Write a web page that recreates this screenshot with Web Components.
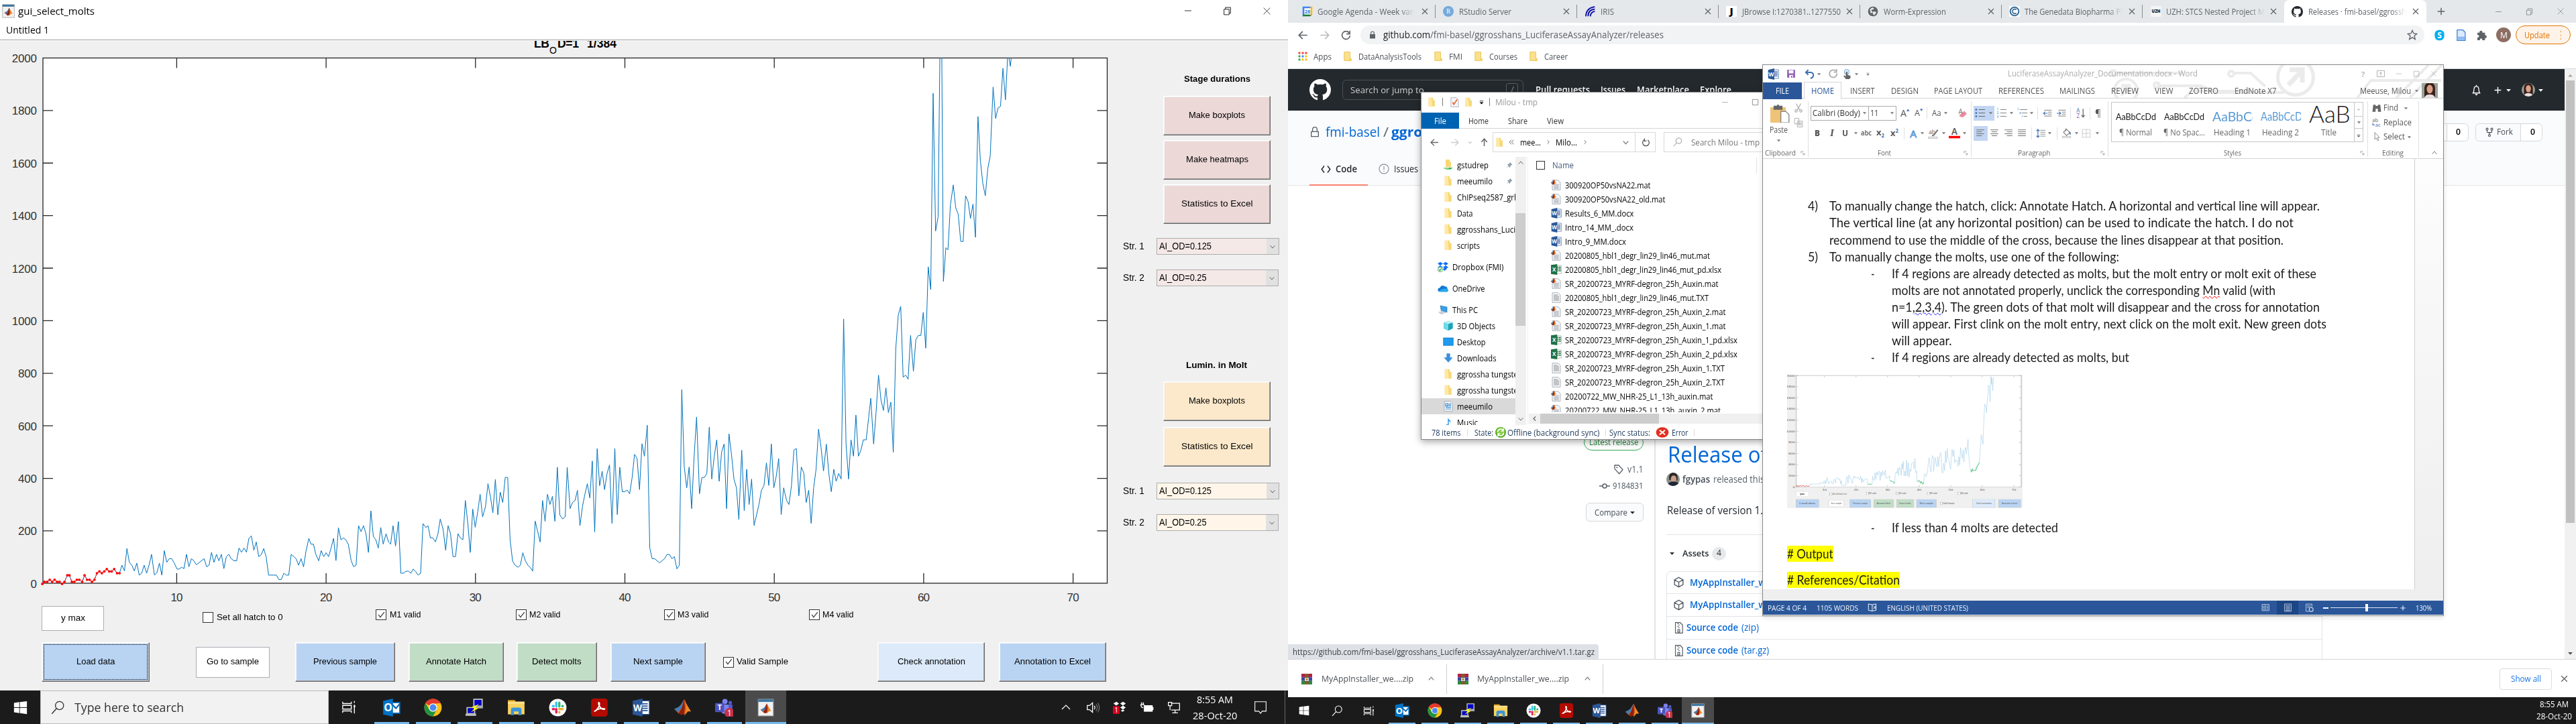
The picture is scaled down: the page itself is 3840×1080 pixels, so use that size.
<!DOCTYPE html>
<html lang="en"><head><meta charset="utf-8"><title>Desktop</title>
<style>html,body{margin:0;padding:0;width:3840px;height:1080px;overflow:hidden;background:#fff;font-family:"Open Sans","Noto Sans",sans-serif}</style></head>
<body><desk-top></desk-top>
<script>
/* ---------- layout primitives ---------- */
const def=(n,c)=>customElements.define(n,c);
const num=(e,a,d=0)=>e.hasAttribute(a)?parseFloat(e.getAttribute(a)):d;
class Tracks extends HTMLElement{
  tracks(key){
    const o=num(this,'o'),kids=[...this.children];
    const at=k=>(k.hasAttribute('cx')&&key==='x'?num(k,'cx')-num(k,'s',16)/2:num(k,key))-o;
    const stops=[...new Set([0,...kids.map(at)])].sort((a,b)=>a-b);
    kids.forEach(k=>{k.style[key==='x'?'gridColumnStart':'gridRowStart']=stops.indexOf(at(k))+1;k.style[key==='x'?'gridRowStart':'gridColumnStart']=1});
    return stops.slice(1).map((v,i)=>(v-stops[i])+'px').join(' ')+' minmax(0,1fr)';
  }
}
def('ui-row',class extends Tracks{connectedCallback(){
  if(this.shadowRoot)return;
  this.attachShadow({mode:'open'}).innerHTML='<style>:host{display:grid;box-sizing:border-box;align-items:center;justify-items:start;width:100%}</style><slot></slot>';
  this.style.height=num(this,'h')+'px';this.style.gridTemplateRows=num(this,'h')+'px';this.style.gridTemplateColumns=this.tracks('x');
}});
def('ui-col',class extends Tracks{connectedCallback(){
  if(this.shadowRoot)return;
  this.attachShadow({mode:'open'}).innerHTML='<style>:host{display:grid;box-sizing:border-box;align-items:start;justify-items:start;grid-template-columns:100%}</style><slot></slot>';
  this.style.gridTemplateRows=this.tracks('y');
}});
def('ui-box',class extends HTMLElement{connectedCallback(){
  if(this.shadowRoot)return;
  this.attachShadow({mode:'open'}).innerHTML='<style>:host{display:flex;align-items:center;justify-content:center;box-sizing:border-box;overflow:hidden}</style><slot></slot>';
  this.style.width=num(this,'w')+'px';this.style.height=num(this,'h')+'px';
}});
/* single line of text, fitted horizontally to a given width */
def('ui-text',class extends HTMLElement{connectedCallback(){
  if(this.shadowRoot)return;
  this.attachShadow({mode:'open'}).innerHTML='<style>:host{display:block;flex:none;white-space:pre;line-height:1.36}span{display:inline-block;transform-origin:0 50%}</style><span><slot></slot></span>';
  const s=this.shadowRoot.querySelector('span'),w=num(this,'w');
  if(w){const n=s.getBoundingClientRect().width;if(n)s.style.transform=`scaleX(${w/n})`;this.style.width=w+'px'}
}});
const T=(x,t,w,f=12,st='')=>`<ui-text x="${x}" ${w?`w="${w}"`:''} style="font-size:${f}px;${st}">${t}</ui-text>`;
const B=(x,w,h,st='',inner='')=>`<ui-box x="${x}" w="${w}" h="${h}" style="${st}">${inner}</ui-box>`;
const I=(cx,n,s=16,st='')=>`<ui-icon cx="${cx}" s="${s}" n="${n}" style="${st}"></ui-icon>`;
const rowAt=o=>(cy,h,inner,st='')=>`<ui-row y="${cy-h/2}" h="${h}" o="${o}" style="${st}">${inner}</ui-row>`;

/* ---------- icons ---------- */
const P=(d,c='currentColor',w=1.6,x='')=>`<path d="${d}" fill="none" stroke="${c}" stroke-width="${w}" ${x}/>`;
const F=(d,c='currentColor')=>`<path d="${d}" fill="${c}"/>`;
const mlogo='<path d="M1 14l6-3 3-3 4-7c1 0 2 3 4 8l5 8-4-2-5 6-4-2-3 1z" fill="#d9541a"/><path d="M1 14l6-3 3-3 4-7-3 11-5 6z" fill="#3d7fb8"/><path d="M14 1c-1 3-2 12-7 18l3 3 4-2 1-8z" fill="#8c1f10"/><path d="M14 2c3 4 4 12 0 21l5-6 4 0z" fill="#f08a24"/>';
const doc='<path d="M3 1h13l5 5v17H3z" fill="#f4f5f7" stroke="#9aa3ad" stroke-width="1.2"/>';
const oct='<path fill="currentColor" transform="scale(1.5)" d="M8 0C3.58 0 0 3.58 0 8c0 3.54 2.29 6.53 5.47 7.59.4.07.55-.17.55-.38 0-.19-.01-.82-.01-1.49-2.01.37-2.53-.49-2.69-.94-.09-.23-.48-.94-.82-1.13-.28-.15-.68-.52-.01-.53.63-.01 1.08.58 1.23.82.72 1.21 1.87.87 2.33.66.07-.52.28-.87.51-1.07-1.78-.2-3.64-.89-3.64-3.95 0-.87.31-1.59.82-2.15-.08-.2-.36-1.02.08-2.12 0 0 .67-.21 2.2.82.64-.18 1.32-.27 2-.27s1.36.09 2 .27c1.53-1.04 2.2-.82 2.2-.82.44 1.1.16 1.92.08 2.12.51.56.82 1.27.82 2.15 0 3.07-1.87 3.75-3.65 3.95.29.25.54.73.54 1.48 0 1.07-.01 1.93-.01 2.2 0 .21.15.46.55.38A8.01 8.01 0 0016 8c0-4.42-3.58-8-8-8z"/>';
const txt=(x,y,s,c,t,st='')=>`<text x="${x}" y="${y}" font-size="${s}" fill="${c}" font-family="Open Sans" text-anchor="middle" ${st}>${t}</text>`;
const lines=(a,c='#888')=>a.map(([x,y,w])=>`<path d="M${x} ${y}h${w}" stroke="${c}" stroke-width="1.6"/>`).join('');
const ic={
 fig:'<rect x="2" y="1" width="20" height="22" fill="#f2f2f2" stroke="#aaa"/><rect x="2" y="1" width="20" height="3.5" fill="#3f78a0"/><g transform="translate(4.5 6) scale(.63)">'+mlogo+'</g>',
 matlab:mlogo,
 matfile:doc+lines([[6,11,12],[6,14,12],[6,17,12],[6,20,12]],'#b0b6be')+'<path d="M10 11v10M14 11v10" stroke="#b0b6be"/><g transform="translate(-1 -1) scale(.55)">'+mlogo+'</g>',
 word:'<path d="M13 3h10v18H13z" fill="#fff" stroke="#2b579a"/>'+lines([[14,7,7],[14,10,7],[14,13,7],[14,16,7]],'#2b579a')+'<path d="M1 3l13-3v24L1 21z" fill="#2b579a"/>'+txt(7.5,16.5,12,'#fff','W','font-weight="700"'),
 excel:'<path d="M12 3h11v18H12z" fill="#fff" stroke="#999"/><path d="M14 7h3M18 7h4M14 11h3M18 11h4M14 15h3M18 15h4" stroke="#207245" stroke-width="2.4"/><path d="M0 2l14-2v24L0 22z" fill="#207245"/>'+txt(7,16.5,12,'#fff','X','font-weight="700"'),
 txtf:doc+lines([[6,6,9],[6,9,12],[6,12,12],[6,15,12],[6,18,12]],'#999'),
 start:F('M1 4l9-1.3v8.800H1zM11 2.600L23 1v10.500H11zM1 12.500h9v8.800L1 20zM11 12.500h12V23l-12-1.600z','#fff'),
 mag:'<circle cx="14.500" cy="8.500" r="7" fill="none" stroke="currentColor" stroke-width="1.500"/>'+P('M9.500 13.500L1.500 22.500'),
 tview:P('M2 3v3h14V3M2 21v-3h14v3M2 9h14v6H2zM21 2v3M21 8v14','#fff',1.500)+F('M20 9h2.500v3H20z','#fff'),
 outlook:'<path d="M12 6h11v13H12z" fill="#fff"/>'+P('M13 8l5 5 5-6','#0a64ad',2)+'<path d="M12 5.500h11v14H12" fill="none" stroke="#0072c6" stroke-width="1.500"/><path d="M1 3l13-3v24L1 21z" fill="#0072c6"/>'+txt(7.500,17,14,'#fff','O','font-weight="700"'),
 chrome:'<circle cx="12" cy="12" r="11.500" fill="#fbc116"/><path d="M12 12L2 6.300A11.500 11.500 0 0122 6.300L12 6.800z" fill="#e33b2e"/><path d="M2 6.300A11.500 11.500 0 0012 23.500l5-9L12 12 7 14.600z" fill="#229342"/><path d="M2 6.300A11.500 11.500 0 0122 6.300H12z" fill="#e33b2e"/><circle cx="12" cy="12" r="5.500" fill="#fff"/><circle cx="12" cy="12" r="4.400" fill="#4a8af4"/>',
 putty:'<path d="M11 1h11v9H11z" fill="#0000c8" stroke="#c8c8c8" stroke-width="1.500"/><path d="M9 10h14v3H10z" fill="#aaa"/><path d="M2 12h10v8H2z" fill="#0000c8" stroke="#c8c8c8" stroke-width="1.500"/><path d="M0 20h14v3H0z" fill="#bbb"/><path d="M18 7l-10 5 4 1-5 5 10-5-4-1z" fill="#ff0"/>',
 explorer:'<path d="M1 2h9l2 3H1z" fill="#e8a317"/><path d="M1 5h22v16H1z" fill="#fbd25d"/><path d="M1 4h22v3H1z" fill="#fde08a"/><path d="M5 22v-7q0-3 3-3h8q3 0 3 3v7h-4v-5H9v5z" fill="#3c95d9"/>',
 slack:'<circle cx="12" cy="12" r="11.500" fill="#fff"/><g stroke-width="3" stroke-linecap="round"><path d="M10 5.500v5" stroke="#36c5f0"/><path d="M5.500 10h1" stroke="#36c5f0"/><path d="M14 5.500v5M18.500 10h-.5" stroke="#2eb67d"/><path d="M14 14h4.500M14 18.500v-.5" stroke="#ecb22e"/><path d="M5.500 14H7M10 14v4.500" stroke="#e01e5a"/></g>',
 acro:'<rect x="1" y="0" width="22" height="24" rx="4" fill="#b30b00"/>'+P('M5 17c4-1 8-8 7-11-1-2-2 0 0 4s6 5 7 4-8-2-13 3','#fff',1.600),
 teams:'<circle cx="13" cy="4" r="3.500" fill="#7b83eb"/><circle cx="20" cy="5.500" r="2.400" fill="#5059c9"/><path d="M11 8h12v8q-3 5-9 4z" fill="#5059c9"/><path d="M7 8h11v9q-4 5-9 2z" fill="#7b83eb"/><rect x="0" y="6" width="12" height="12" rx="1" fill="#4b53bc"/>'+txt(6,15.500,10,'#fff','T','font-weight="700"')+'<circle cx="19" cy="19" r="6.500" fill="#c4314b"/>'+txt(19,23,11,'#fff','1'),
 up:P('M4 16l8-8 8 8','#fff'),
 spk:P('M2 8.500v7h4l5 4.500V4L6 8.500zM14 9q2 3 0 6','#fff',1.500)+P('M17 6q4 6 0 12M20 4q5 8 0 16','#777',1.400),
 dbred:F('M6 2l5 3.500-5 3.500-5-3.500zM18 2l5 3.500-5 3.500-5-3.500zM18 9l5 3.500-5 3.500-5-3.500zM14 18l4-2 3 2-4 2z','#fff')+'<rect x="0" y="10" width="12" height="14" rx="2" fill="#d70022"/>'+txt(6,21.500,12,'#fff','1'),
 batt:F('M7 8h15v11H7z','#fff')+P('M22.500 11v5M1 7h7M3 3v4M6 3v4M2 7q0 5 4 5','#fff'),
 mon:P('M7 5h15v12H7M14 17v5M9 22h10M2 3h6v6H2zM5 9v8','#fff',1.500),
 note:P('M2 2h20v17h-7l-3 4-3-4H2z','#fff',1.300),
 x:P('M4 4l16 16M20 4L4 20','currentColor',2.400), xthin:P('M3 3l18 18M21 3L3 21','currentColor',1.300),
 min:P('M2 12h20','currentColor',1.600), max:P('M3 3h18v18H3z','currentColor',1.700), rest:P('M3 7h14v15H3zM7 7V2h14v16h-4','currentColor',1.600),
 chkm:P('M4 11l5 7L20 4','#444',2.400),
 v:P('M4 8l8 9 8-9','currentColor',2.200), upc:P('M4 16l8-9 8 9','currentColor',2.200), left:P('M16 4l-8 8 8 8','currentColor',3), right:P('M8 4l8 8-8 8','currentColor',2.600), laq:P('M12 4l-7 8 7 8M20 4l-7 8 7 8','currentColor',2),
 caret:F('M3 8h18l-9 10z'), caretu:F('M3 17h18L12 7z'),
 back:P('M22 12H3M11 3l-9 9 9 9','currentColor',2.600), fwd:P('M2 12h19M13 3l9 9-9 9','currentColor',2.600), upa:P('M12 22V3M4 11l8-9 8 9','currentColor',2.800),
 reload:P('M20 7A9.500 9.500 0 1021.500 13M21 1v8h-8','currentColor',2.600), refr:P('M7 5A9 9 0 1017 5M8 1v7h6','currentColor',2.400),
 lock:F('M4 10h16v13H4z')+P('M7.500 10V6.500a4.500 4.500 0 019 0V10','currentColor',2.400), olock:P('M4 11h16v11H4zM7 11V6a5 5 0 0110 0v5','currentColor',2),
 cal:'<rect x="1" y="1" width="22" height="22" rx="2" fill="#fff"/><path d="M1 1h18v4H5v18H1z" fill="#4285f4"/><path d="M19 1h4v18h-4z" fill="#fbbc04"/><path d="M2 19h17v4H2z" fill="#188038"/><path d="M19 19h4l-4 4z" fill="#ea4335"/>'+txt(12,16,11,'#1a73e8','28','font-weight="700"'),
 R:'<circle cx="12" cy="12" r="12" fill="#75aadb"/><text x="12" y="17" font-size="14" fill="#fff" text-anchor="middle" font-family="Liberation Serif">R</text>',
 iris:P('M3 23Q4 4 23 2M8 23Q8 8 23 7M13 23Q14 13 23 12','#1a1aa8',3),
 J:'<rect width="24" height="24" fill="#fff"/>'+txt(12,20,22,'#000','J','font-weight="800"'),
 globe:'<circle cx="12" cy="12" r="11" fill="#5f6368"/>'+F('M5 8q5-6 8-4 3 3-2 4t-1 4-3 4zM13 12l6 1q1 3-5 8-1-4-3-5z','#e8eaed'),
 gene:'<rect width="24" height="24" fill="#fff"/><circle cx="12" cy="12" r="9.500" fill="none" stroke="#3a6e99" stroke-width="3"/>'+P('M16 8.500a5 5 0 100 7','#3a6e99',2.500),
 uzh:'<rect width="24" height="24" fill="#f4f4f4"/>'+txt(12,15.500,9,'#111','UZH','font-weight="800"'),
 oct, plus:P('M12 3v18M3 12h18','currentColor',2.600),
 star:P('M12 2l3 7 7 .7-5.500 4.800L18.500 22 12 17.800 5.500 22l2-7.500L2 9.700 9 9z','#5f6368',2),
 skype:'<rect x="2" y="1" width="20" height="22" rx="9" fill="#00aff0"/>'+txt(12,18,17,'#fff','S','font-weight="700"'),
 page:'<path d="M4 1h12l5 5v17H4z" fill="#dcebfd" stroke="#3c7fd0" stroke-width="1.800"/><path d="M5 15h15v7H5z" fill="#8dbcf2"/>',
 puz:F('M3 7h5c-2-6 8-6 6 0h6v6c5-2 5 8 0 6v5h-6c1-5-7-5-5 0H3v-6c5 0 5-6 0-6z','#5f6368'),
 apps:['#ea4335','#ea4335','#ea4335','#34a853','#4285f4','#fbbc04','#34a853','#fbbc04','#fbbc04'].map((c,i)=>`<rect x="${1+(i%3)*8.500}" y="${1+(i/3|0)*8.500}" width="5" height="5" fill="${c}"/>`).join(''),
 folder:'<path d="M3 1h15v17h3v5H3z" fill="#fbe08c" stroke="#e2b93b" stroke-width="1.300"/><path d="M17 18h4v5h-5z" fill="#f6cf58"/>',
 fold2:'<path d="M4 1h11v6h4v15H4z" fill="#f7d774"/><path d="M4 1h7l2 20-4 2-5-2z" fill="#fde9a5"/>',
 gfold:'<path d="M6 0h9v5h3v12H6z" fill="#f7d774"/><path d="M2 18h20l-5 4H7z" fill="#36b64a"/><path d="M1 18h12v3H3z" fill="#8fd39b"/>',
 check:doc+P('M7 12l3 5 8-12','#e8622c',2.600), cust:F('M4 12h16l-8 8z','#000')+P('M5 7h14','#000',2),
 pin:F('M14 1l9 9-3 1-4 4-1 5-5-5-7 7 7-9-4-4 5-1 4-4z','#8ea0b0'),
 dropbox:F('M6 1l6 4-6 4-6-4zM18 1l6 4-6 4-6-4zM6 9l6 4-6 4-6-4zM18 9l6 4-6 4-6-4zM12 17l5-3 4 3-6 4z','#0d6efd')+'<circle cx="6" cy="18" r="5.500" fill="#eaf7ea" stroke="#2e9e3b"/>'+P('M3 18l2 2.500 4-5','#2e9e3b',1.800),
 onedrive:F('M2 19q-4-6 3-8 4-8 11-3 5 0 6 5 4 4-1 7H5z','#0f78d4')+F('M2 19q8-8 20-6 4 4-1 7H5z','#28a8ea'),
 pc:'<path d="M6 3l15 3v12L8 14z" fill="#3aa0e8" stroke="#1f6fa8"/><path d="M1 17l10-2 7 4-10 4z" fill="#c9ced3"/>',
 cube:F('M2 5l10-4 10 4v13l-10 5-10-5z','#1ba3b8')+F('M2 5l10 3v15L2 18z','#6edbe6')+F('M2 5l10-4 10 4-10 3z','#b5f2f7'),
 desk:'<path d="M1 3h22v17H1z" fill="#1e9bf0" stroke="#0b6cb8"/>', down:F('M8 2h8v9h6l-10 11L2 11h6z','#3c8fdd'),
 docp:doc+P('M6 6h5v5H6zM13 7h5M13 10h5M6 14h12M6 18h12','#2a8ad4',1.700),
 music:F('M11 1c1 6 7 5 6 12-1-3-3-4-4-4v9c0 5-7 6-7 2 0-3 3-4 5-3z','#1f8fe8'),
 sync:'<circle cx="12" cy="12" r="12" fill="#57ae26"/><circle cx="12" cy="10" r="9" fill="#8ace4c"/>'+P('M5 11a7 7 0 0113-3M19 13a7 7 0 01-13 3M18 3v6h-5M6 21v-6h5','#fff',2.400),
 err:'<circle cx="12" cy="12" r="11.500" fill="#e1301e"/>'+P('M7 7l10 10M17 7L7 17','#fff',2.600),
 bell:P('M5 18q2-2 2-8 0-6 5-6t5 6q0 6 2 8zM12 1v3','#fff',1.800)+F('M9 20h6q-1 3-3 3t-3-3z','#fff'),
 me:'<path d="M0 0h24v24H0z" fill="#9aa59a"/><path d="M4 24V8q1-8 8-8t8 8v16z" fill="#3a211b"/><ellipse cx="12" cy="10" rx="4.500" ry="6.500" fill="#d9a288"/><path d="M3 24q3-7 9-6 6-1 9 6z" fill="#e8dfe0"/>',
 face:'<path d="M0 0h24v24H0z" fill="#8d8f88"/><path d="M5 13V6q2-6 8-6t7 8v6z" fill="#2c2825"/><ellipse cx="13" cy="11" rx="5" ry="6" fill="#c9a08a"/><path d="M1 24q2-8 12-8t11 8z" fill="#1d2634"/>',
 code:P('M8 4l-6 8 6 8M16 4l6 8-6 8','#24292e',2.400), issue:'<circle cx="12" cy="12" r="10.500" fill="none" stroke="#959da5" stroke-width="2"/>'+P('M12 6v8M12 16v2','#959da5',2),
 fork:P('M6 7v4q0 2 2 2h8q2 0 2-2V7M12 13v5','#444d56',2)+'<g fill="none" stroke="#444d56" stroke-width="2"><circle cx="6" cy="4.500" r="2.500"/><circle cx="18" cy="4.500" r="2.500"/><circle cx="12" cy="20.500" r="2.500"/></g>',
 tag:P('M3 3h9l9 10-8 9L3 11z','#586069',2)+'<circle cx="8" cy="8" r="1.500" fill="#586069"/>', commit:'<circle cx="12" cy="12" r="4.500" fill="none" stroke="#586069" stroke-width="2.300"/>'+P('M0 12h7M17 12h7','#586069',2.300),
 pkg:P('M12 2l9 5v10l-9 5-9-5V7zM3 7l9 5 9-5M12 12v10','#586069',2), zip:P('M5 1h10l5 5v17H5zM9 3h3M11 6h3M9 9h3M11 12h3M10 16h4v5h-4z','#586069',1.700),
 rar:'<path d="M0 0h24v8H0z" fill="#b0224b"/><path d="M0 8h24v8H0z" fill="#3a46a8"/><path d="M0 16h24v8H0z" fill="#2c8a3c"/><path d="M8 0h8v24H8z" fill="#8a5a2a"/><rect x="7" y="8" width="10" height="9" fill="#ddd" stroke="#333"/><path d="M10 10h4v5h-4z" fill="#b5862e"/>',
 save:'<path d="M2 2h20v20H2z" fill="#8e5ab5"/><path d="M6 3h12v8H6zM7 15h10v7H7z" fill="#fff"/><path d="M12 17h3v5h-3z" fill="#8e5ab5"/>',
 undo:P('M4 8h11q7 1 6 8-1 5-7 6M9 2L3 8l6 6','#3f73b5',3.200), redo:P('M18 5A9.500 9.500 0 1021 11M20 0v8h-7','#b0b0b0',3.200),
 touch:'<circle cx="11" cy="7" r="5.500" fill="none" stroke="#7db0dd" stroke-width="2"/>'+F('M9 6h4v8l7 2v5l-3 3H9l-6-8 3-1 3 3z','#666'),
 paste:'<path d="M0 5h19v19H0z" fill="#eec377"/><path d="M4 3h4q1-3 3 0h4v5H4z" fill="#666"/><path d="M13 13h6l4 4v10H13z" fill="#fff" stroke="#777" transform="translate(0 -3)"/>',
 cut:P('M6 1l9 16M18 1L9 17','#aaa',2)+'<g fill="none" stroke="#aaa" stroke-width="2"><circle cx="6" cy="19.500" r="3"/><circle cx="18" cy="19.500" r="3"/></g>',
 copy:'<path d="M2 1h11v14H2zM9 8h13v15H9z" fill="#fff" stroke="#aaa" stroke-width="1.600"/>'+lines([[11,12,9],[11,15,9],[11,18,9]],'#aaa'), paint:F('M14 8l6-6 3 3-6 7z','#777')+F('M3 13l8-5 6 7-7 8z','#eec377')+P('M10 7l9 8','#777',2.500),
 launch:P('M3 12V3h12M9 9l10 10M20 11v9h-9','#888',2.400),
 eraser:F('M8 14l9-8 7 7-9 9H9l-5-4z','#ec8b9d')+txt(8,14,17,'#777','A'),
 bul:lines([[9,4,15],[9,12,15],[9,20,15]],'#666')+F('M1 2h4v4H1zM1 10h4v4H1zM1 18h4v4H1z','#3f73b5'), numl:lines([[9,4,15],[9,12,15],[9,20,15]],'#888')+txt(3,7,8,'#3f73b5','1')+txt(3,15,8,'#3f73b5','2')+txt(3,23.500,8,'#3f73b5','3'),
 multi:lines([[6,4,18],[11,12,13],[15,20,9]],'#888')+txt(2,7,8,'#3f73b5','1')+txt(7,15,8,'#3f73b5','a')+txt(12,23,8,'#3f73b5','i'),
 outd:lines([[4,4,19],[13,9,10],[13,14,10],[4,19,19]],'#777')+P('M12 12H2M6 8l-4 4 4 4','#3f73b5',2), ind:lines([[4,4,19],[13,9,10],[13,14,10],[4,19,19]],'#777')+P('M0 12h10M6 8l4 4-4 4','#3f73b5',2),
 sort:txt(6,11,13,'#3f73b5','A')+txt(6,24,13,'#8e5ab5','Z')+P('M18 2v20M14 17l4 5 4-5','#666',2),
 al:lines([[2,3,20],[2,8,14],[2,13,20],[2,18,14]],'#666'), ac:lines([[2,3,20],[5,8,14],[2,13,20],[5,18,14]],'#666'), ar:lines([[2,3,20],[8,8,14],[2,13,20],[8,18,14]],'#666'), aj:lines([[2,3,20],[2,8,20],[2,13,20],[2,18,20]],'#666'),
 ls:lines([[11,4,13],[11,9,13],[11,14,13],[11,19,13]],'#888')+P('M5 2v20M1 6l4-4 4 4M1 18l4 4 4-4','#3f73b5',2), bucket:P('M5 10l7-7 8 8-8 7zM10 1v6','#777',1.700)+F('M19 8q5 3 2 9-3-3-2-9','#3f73b5')+'<path d="M2 20h20v3H2z" fill="#fff" stroke="#999"/>',
 bord:P('M2 2h20v20H2zM12 2v20M2 12h20','#999',1.600,'stroke-dasharray="2 2"'), abhl:txt(9,13,13,'#666','ab')+P('M22 4l-9 12-4 1','#777',3)+'<path d="M1 20h20v3H1z" fill="#fff" stroke="#999"/>',
 Ared:txt(12,16,19,'#555','A','font-weight="600"')+F('M0 18h24v5H0z','#f00'), Aout:`<text x="12" y="21" font-size="23" font-family="Open Sans" text-anchor="middle" fill="#fff" stroke="#5b9bd5" stroke-width="1.500">A</text>`,
 bino:F('M3 4h6v3h6V4h6l2 18h-8v-8H9v8H1z','#666'), repl:txt(8,10,13,'#666','ab')+txt(15,23,13,'#3f73b5','ac')+P('M2 13v5h5','#3f73b5',2), sel:P('M7 1v18l4-4 3 7 3-1-3-7h5z','#888',1.600),
 help:txt(12,21,24,'#aaa','?','font-weight="600"'), rib:P('M1 3h22v18H1zM12 18V8M8 12l4-5 4 5','#aaa',1.800),
 book:P('M2 3l9 2v15l-9-2zM11 5l9-2v15l-9 2M14 8l6 7M20 8l-6 7','#fff',1.500), read:P('M2 3h9v17H2zM12 3h9v17h-9M4 8h5M4 12h5M14 8h5M14 12h5M4 16h5M14 16h5','#dbe4f2',1.500), print:P('M3 2h18v20H3z','#dbe4f2',1.500)+lines([[6,7,12],[6,11,12],[6,15,12],[6,19,12]],'#dbe4f2'), web:P('M3 2h16v8M3 2v20h8M6 7h10M6 11h7','#dbe4f2',1.500)+'<circle cx="17" cy="17" r="5.500" fill="none" stroke="#dbe4f2" stroke-width="2"/>'
};
def('ui-icon',class extends HTMLElement{connectedCallback(){
  if(this.shadowRoot)return;const s=num(this,'s',16);
  this.attachShadow({mode:'open'}).innerHTML=`<style>:host{display:block;flex:none;width:${s}px;height:${s}px}svg{display:block;width:100%;height:100%}</style><svg viewBox="0 0 24 24">${ic[this.getAttribute('n')]||''}</svg>`;
}});

/* ---------- MATLAB axes ---------- */
const DATA=`S3 103,961 108,952 115,952 121,943 127,952 133,943 139,952 145,952 151,961 157,952 164,924 169,924 175,952 181,952 187,943 193,943 200,952 206,924 212,943 218,943 224,952 230,943 236,915 242,907 248,915 254,907 260,897 266,907 272,907 278,897 285,915 291,915 297,880 303,905 309,808 315,868 321,880 327,905 333,871 339,923 345,915 351,880 357,915 363,880 369,833 376,923 382,913 388,871 394,923 400,817 406,868 412,852 418,852 424,870 431,897 436,897 442,889 448,895 454,833 460,887 466,852 472,861 478,878 497,852 503,887 509,880 515,825 521,868 527,833 533,861 539,833 545,895 551,843 557,833 563,852 570,861 576,861 582,806 588,824 594,806 600,824 606,764 612,753 618,815 624,780 630,843 636,835 642,808 648,843 654,923 673,923 679,942 685,942 691,915 697,923 703,923 709,833 721,852 727,880 733,852 739,887 745,820 752,764 757,789 763,789 769,833 776,861 782,817 788,843 794,826 800,843 806,806 812,764 818,860 824,718 830,770 836,762 842,770 848,789 855,861 861,887 867,880 873,709 879,735 885,709 891,743 897,825 903,645 909,755 915,770 921,806 927,717 933,789 940,744 946,780 951,789 957,709 963,797 970,691 976,915 982,915 988,907 994,905 1000,915 1006,897 1012,907 1018,923 1024,915 1030,700 1037,717 1042,709 1048,762 1054,762 1060,779 1066,747 1072,680 1079,726 1085,815 1091,709 1097,744 1103,843 1109,843 1115,744 1121,762 1127,770 1133,600 1139,700 1145,825 1151,637 1157,716 1163,650 1169,573 1175,671 1182,627 1188,527 1194,582 1200,653 1206,509 1212,662 1218,564 1224,609 1230,500 1236,500 1242,770 1248,862 1254,880 1261,889 1267,880 1273,826 1279,861 1285,880 1291,889 1297,906 1303,689 1309,733 1315,780 1321,600 1327,690 1333,573 1339,617 1345,582 1351,690 1357,456 1363,662 1370,680 1376,671 1381,456 1388,635 1394,608 1400,600 1406,556 1412,709 1418,627 1424,573 1430,527 1436,589 1442,429 1448,736 1454,375 1460,536 1466,473 1472,553 1478,483 1484,446 1490,699 1497,375 1503,661 1509,456 1515,562 1521,562 1527,555 1533,571 1539,501 1545,400 1551,417 1557,553 1563,354
S4 1,408 8,274 14,806 20,852 26,852 38,870 50,852 56,834 62,834 68,852 74,843 80,896 86,880 92,120 98,455 104,545 110,455 116,635 122,410 128,238 135,571 141,500 147,500 153,483 159,282 165,507 171,410 177,337 183,517 189,390 195,355 201,635 207,311 213,400 219,507 225,545 231,682 238,382 244,644 250,465 256,617 262,507 268,708 280,617 286,555 292,536 298,437 304,535 310,355 316,545 322,495 328,418 334,661 340,545 347,600 353,617 359,536 365,381 371,375 377,580 383,455 389,481 395,609 401,555 407,699 413,545 419,465 425,291 431,370 437,472 444,356 450,483 456,562 462,465 468,517 474,483 480,507 S2 486,1382 S4 492,355 498,507 504,337 510,408 516,230 522,408 528,383 534,337 541,337 547,240 552,157 559,355 565,220 571,57 577,165 583,210 589,112 595,219 601,174 607,391 S2 613,1510 619,1365 625,1327 S4 631,66 637,57 643,74 S2 649,1453 S4 656,40 S2 662,1470 668,1453 674,1453 680,1353 686,1508 692,1156 698,1254 704,404 710,1001 716,940 722,0 724,0 729,1219 735,1073 740,1082 746,890 753,801 759,900 765,928 771,1046 777,1046 783,848 789,873 795,946 801,884 807,1028 813,505 819,695 825,795 831,848 837,730 843,675 850,377 856,513 862,467 868,461 874,296 880,432 886,220 892,287 896,220`;
const series=(()=>{let m='S3',out=[];for(const t of DATA.split(/\s+/)){if(t[0]==='S'){m=t;continue}const[a,b]=t.split(',').map(Number);out.push([((m==='S3'?0:960)+a/1.6333).toFixed(1),((m==='S2'?0:540)+b/2.9037).toFixed(1)])}return out})();
def('axes-chart',class extends HTMLElement{connectedCallback(){
  let g='';
  for(let i=0;i<7;i++){const x=263.4+i*222.7;g+=`<path d="M${x} 86.500v15M${x} 870v-15"/>`}
  for(let i=1;i<10;i++){const y=86.500+i*78.380;g+=`<path d="M64 ${y}h15M1650.500 ${y}h-15"/>`}
  let t='';
  for(let i=0;i<7;i++)t+=`<text x="${263.4+i*222.7}" y="897" text-anchor="middle" textLength="18">${(i+1)*10}</text>`;
  for(let i=0;i<=10;i++){const s=String(2000-i*200);t+=`<text x="55" y="${93+i*78.380}" text-anchor="end" textLength="${s.length*9.300}">${s}</text>`}
  this.attachShadow({mode:'open'}).innerHTML=`<style>:host,svg{display:block}</style><svg width="1700" height="842" viewBox="0 61 1700 842" font-family="Liberation Sans" font-size="17" fill="#333">
  <defs><clipPath id="c"><rect x="60" y="86" width="1592" height="788"/></clipPath></defs>
  <rect x="64" y="86.500" width="1586.500" height="783.500" fill="#fff"/><g stroke="#262626" stroke-width="1.300" fill="none">${g}<rect x="64" y="86.500" width="1586.500" height="783.500"/></g>${t}
  <g font-weight="700" font-size="17.500" fill="#000"><text x="796" y="71" textLength="23">LB</text><text x="819" y="80" font-size="14" font-weight="400">O</text><text x="831" y="71" textLength="32">D=1</text><text x="875" y="71" textLength="44">1/384</text></g>
  <g clip-path="url(#c)"><polyline fill="none" stroke="#0072bd" stroke-width="1" points="${series.map(p=>p.join()).join(' ')}"/>
  <polyline fill="none" stroke="#e8102a" stroke-width="1" stroke-dasharray="3 2" points="${series.slice(0,32).map(p=>p.join()).join(' ')}"/>${series.slice(0,32).map(p=>`<circle cx="${p[0]}" cy="${p[1]}" r="1.900" fill="#f00"/>`).join('')}</g></svg>`;
}});

/* ---------- MATLAB window ---------- */
def('matlab-window',class extends HTMLElement{connectedCallback(){
  const R=rowAt(0),ff="font-family:'Liberation Sans',sans-serif;";
  const btn=(x,w,h,c,t,tw,foc)=>B(x,w,h,`background:${c};border:1px solid;border-color:#fff #696969 #696969 #fff;box-shadow:inset -1px -1px #a0a0a0,inset 1px 1px #f4f4f4`,foc?B(0,w-6,h-6,'border:1px dotted #000',T(0,t,tw,13.500,ff)):T(0,t,tw,13.500,ff));
  const box=(x,w,h,t,tw)=>B(x,w,h,'background:#fff;border:1px solid #abadb3',T(0,t,tw,13.500,ff));
  const chk=(x,on)=>B(x,16,16,'background:#fff;border:1px solid #333',on?I(0,'chkm',13):'');
  const sel=(w,c,t,tw)=>B(1724,w,25,`background:${c};border:1px solid #adadad;justify-content:flex-start`,`<ui-row h="23" o="0">${T(3,t,tw,14,ff)}${B(w-20,18,23,'background:#e1e1e1;color:#555',I(0,'v',10))}</ui-row>`);
  const bl='#b9d4f3',gr='#c1ddc6',pk='#ebd8d7',or='#fce9cb';
  this.attachShadow({mode:'open'}).innerHTML=`<style>:host{display:block;width:1920px;height:1030px;background:#f0f0f0;overflow:hidden}</style>
  <ui-col o="0">
  ${R(29.500,59,'','background:#fff')}
  ${R(16,30,I(12,'fig',21)+T(27,'gui_select_molts',114,15)+I(1771,'min',12)+I(1829,'rest',13)+I(1888,'xthin',13),'color:#000')}
  ${R(45,24,T(8.500,'Untitled 1',64,14.500))}
  ${R(59.500,2,'','background:#a0a0a0;border-bottom:1px solid #fff')}
  <axes-chart y="61"></axes-chart>
  ${R(118,20,T(1765,'Stage durations',99,13.500,ff+'font-weight:700'))}
  ${R(172.500,59,btn(1734,160,59,pk,'Make boxplots',84))}${R(238.500,59,btn(1734,160,59,pk,'Make heatmaps',93))}${R(304.500,59,btn(1734,160,59,pk,'Statistics to Excel',106.500))}
  ${R(367.500,26,T(1673.500,'Str. 1',32,14,ff)+sel(183,'#f5e9e8','AI_OD=0.125',78))}${R(414.500,26,T(1673.500,'Str. 2',32,14,ff)+sel(182,'#f5e9e8','AI_OD=0.25',70.500))}
  ${R(545,20,T(1767.500,'Lumin. in Molt',91,13.500,ff+'font-weight:700'))}
  ${R(598.500,59,btn(1734,160,59,or,'Make boxplots',84))}${R(666.500,59,btn(1734,160,59,or,'Statistics to Excel',106.500))}
  ${R(732.500,26,T(1673.500,'Str. 1',32,14,ff)+sel(183,'#fff6e9','AI_OD=0.125',78))}${R(779.500,26,T(1673.500,'Str. 2',32,14,ff)+sel(182,'#fff6e9','AI_OD=0.25',70.500))}
  ${R(917,20,chk(560,1)+T(580.500,'M1 valid',46.500,13.500,ff)+chk(769,1)+T(789,'M2 valid',46.500,13.500,ff)+chk(990,1)+T(1010,'M3 valid',46.500,13.500,ff)+chk(1206,1)+T(1226,'M4 valid',46.500,13.500,ff))}
  ${R(921,20,chk(302)+T(323,'Set all hatch to 0',98.500,13.500,ff))}
  ${R(922,37,box(62,93,37,'y max',36))}
  ${R(987.500,60,btn(62,161,59,bl,'Load data',57.500,1)+box(292,110,46,'Go to sample',78)+btn(440,149,59,bl,'Previous sample',95)+btn(609,142,59,gr,'Annotate Hatch',90)+btn(770,120,59,gr,'Detect molts',73.500)+btn(910,142,59,bl,'Next sample',74)+chk(1078,1)+T(1098,'Valid Sample',77,13.500,ff)+btn(1308,160,59,'#dceafa','Check annotation',101)+btn(1489,160,59,bl,'Annotation to Excel',114))}
  </ui-col>`;
}});

/* ---------- taskbars ---------- */
const APPS=['outlook','chrome','putty','explorer','slack','acro','word','matlab','teams','fig'];
def('task-bar',class extends HTMLElement{connectedCallback(){
  const big=this.hasAttribute('primary'),H=big?50:40,o=big?0:1920,R=rowAt(o),step=big?62:49.050,x0=big?583.500:2090,s=big?27:22,uw=big?52:40;
  const icons=APPS.map((n,i)=>{const c=x0+i*step,w=i==9?(big?61:48):uw;
    return B(c-w/2,w,H,`flex-direction:column;justify-content:flex-end;background:${i==9?'#4b4b4b':'none'};border-bottom:${big?3:2}px solid #76b9ed`,I(0,n,s,`margin-bottom:${(H-s)/2-(big?3:2)}px`))}).join('');
  const clk=(w1,w2,f)=>`<ui-text w="${w1}" style="font-size:${f}px">8:55 AM</ui-text><ui-text w="${w2}" style="font-size:${f}px">28-Oct-20</ui-text>`;
  const body=big?I(30,'start',21)+B(60,430,50,'background:#f2f2f2;border:1px solid #bbb;justify-content:flex-start;color:#333',`<ui-row h="48" o="60">${I(85,'mag',21)}${T(110,'Type here to search',163,18)}</ui-row>`)+I(520,'tview',22)+icons+I(1589,'up',18)+I(1629,'spk',21)+I(1669,'dbred',20)+I(1709,'batt',21)+I(1750,'mon',20)+B(1776,70,50,'flex-direction:column;color:#fff;gap:3px',clk(54,66.500,15))+I(1879,'note',20)+B(1915,1,50,'background:#666')
   :I(1944,'start',16)+I(1993,'mag',17,'color:#fff')+I(2040,'tview',17)+icons+B(3780,55,40,'flex-direction:column;color:#fff;gap:1.500px',clk(43,53,12));
  this.attachShadow({mode:'open'}).innerHTML=`<style>:host{display:block;width:1920px;height:${H}px;background:#1b1b1b;overflow:hidden}</style>${R(H/2,H,body)}`;
}});

/* ---------- Chrome with the GitHub page ---------- */
def('chrome-window',class extends HTMLElement{connectedCallback(){
  const R=rowAt(1920),g='color:#5f6368;',tabs=[['cal','Google Agenda - Week van',145],['R','RStudio Server',78],['iris','IRIS',20],['J','JBrowse I:1270381..1277550',147],['globe','Worm-Expression',93],['gene','The Genedata Biopharma Pl',146],['uzh','UZH: STCS Nested Project M',147]];
  const fade=w=>w>144?'-webkit-mask-image:linear-gradient(90deg,#000 85%,transparent)':'';
  const tabRow=tabs.map(([n,t,w],i)=>{const x=1939.500+i*210.900;return I(x+9,n,16)+T(x+24.500,t,w,12.500,g+fade(n=='J'?0:w))+I(x+184.500,'x',12,g)+(i<6?B(x+199.500,1,20,'background:#8a8d91'):'')}).join('')
   +B(3405,212,34,'background:#fff;border-radius:8px 8px 0 0',`<ui-row h="34" o="3405">${I(3425,'oct',17,'color:#24292e')}${T(3441,'Releases · fmi-basel/ggrossh',146,12.500,g+fade(146))}${I(3601,'x',12,g)}</ui-row>`)+I(3639,'plus',14,g)+I(3725,'min',11,'color:#777')+I(3771,'rest',11,'color:#777')+I(3817,'xthin',12,'color:#777');
  const lk='color:#0366d6;',b6='font-weight:600;',gy='color:#586069;';
  const asset=(y,n,inner)=>R(y,34,B(2484,978,34,'border:1px solid #e1e4e8;border-top:0;justify-content:flex-start;'+(n=='pkg0'?'border-top:1px solid #e1e4e8;border-radius:6px 6px 0 0':''),`<ui-row h="32" o="2484">${I(2501,n.slice(0,3),17)}${inner}</ui-row>`));
  const count=(x,w)=>B(x,w,27,'border:1px solid #d5d8dc;border-radius:6px;background:#fff');
  this.attachShadow({mode:'open'}).innerHTML=`<style>:host{display:block;width:1920px;height:1040px;background:#fff;overflow:hidden;position:relative}</style>
  <ui-col o="0">
  ${R(17,34,tabRow,'background:#e4e8eb')}
  ${R(52,28,I(1942,'back',15,g)+I(1974,'fwd',15,'color:#babcbe')+I(2006,'reload',15,g)+B(2028,1586,28,'background:#f1f3f4;border-radius:14px;justify-content:flex-start',`<ui-row h="28" o="2028">${I(2046,'lock',12,g)}${T(2062,'github.com',70,14,'color:#202124')}${T(2132,'/fmi-basel/ggrosshans_LuciferaseAssayAnalyzer/releases',348,14,g)}${I(3596,'star',16)}</ui-row>`)+I(3636,'skype',17)+I(3668,'page',17)+I(3699,'puz',16)+B(3721,22,22,'background:#8d6e63;border-radius:50%;color:#fff',T(0,'M',11,12.500))+B(3750,82,28,'background:#fdf3e9;border:1px solid #e37400;border-radius:14px;justify-content:flex-start;color:#e37400',`<ui-row h="26" o="3751">${T(3763,'Update',38,12.500)}${T(3815,'⋮',5,17,'font-weight:700')}</ui-row>`))}
  ${R(84,24,I(1942,'apps',14)+T(1958,'Apps',27,12.500)+I(2009,'folder',14)+T(2025,'DataAnalysisTools',94,12.500)+I(2144,'folder',14)+T(2160,'FMI',20,12.500)+I(2204,'folder',14)+T(2220,'Courses',42,12.500)+I(2286,'folder',14)+T(2302,'Career',35,12.500),'color:#4d5156')}
  ${R(102.500,1,'','background:#d8dadd')}
  ${R(134,62,I(1968,'oct',32)+B(2001,270,30,'border:1px solid #4b5157;border-radius:6px;justify-content:flex-start',`<ui-row h="28" o="2002">${T(2013,'Search or jump to...',120,13.500,'color:#ccc')}${B(2245,18,20,'border:1px solid #555b62;border-radius:3px;color:#888',T(0,'/',5,12))}</ui-row>`)+T(2288.500,'Pull requests',81,14,b6)+T(2386,'Issues',37,14,b6)+T(2439.500,'Marketplace',78,14,b6)+T(2534,'Explore',47,14,b6)+I(3691,'bell',17)+I(3723,'plus',13)+I(3739,'caret',9)+B(3759,20,20,'border-radius:50%',I(0,'me',20))+I(3787,'caret',9),'background:#24292e;color:#fff')}
  ${R(221,112,'','background:#fafbfc;border-bottom:1px solid #e1e4e8')}
  ${R(197,30,I(1960,'olock',16,gy)+T(1976,'fmi-basel',81,20,lk)+T(2062,'/',8,20,gy)+T(2074,'ggrosshans_LuciferaseAssayAnalyzer',385,20,lk+'font-weight:700')+count(3580,100)+B(3647,1,27,'background:#d5d8dc')+T(3661,'0',7,12,b6)+count(3690,100)+B(3691,67,25,'background:#fafbfc;border-right:1px solid #d5d8dc;border-radius:6px 0 0 6px')+I(3711,'fork',14)+T(3722,'Fork',24,12,'color:#444d56;')+T(3772,'0',7,12,b6))}
  ${R(252,24,I(1976,'code',15)+T(1991,'Code',32,14,b6)+I(2063,'issue',16)+T(2078,'Issues',36,14),'color:#24292e')}
  ${R(276,2,B(1952,87,2,'background:#f9826c'))}
  ${R(630,706,B(2466,2,706,'background:#e1e4e8'))}
  ${R(660,24,B(2361,89,24,'border:1px solid #34a853;border-radius:12px;color:#22863a',T(0,'Latest release',73.500,12)))}
  ${R(678,44,T(2486,'Release of',149,32,lk))}
  ${R(700,20,I(2413,'tag',16)+T(2425.500,'v1.1',23.500,14,gy))}
  ${R(715,24,B(2484,20,20,'border-radius:50%',I(0,'face',20))+T(2508,'fgypas',41,14,'color:#444d56;'+b6)+T(2554,'released this',76,14,gy))}
  ${R(725,20,I(2391.500,'commit',16)+T(2404,'9184831',45.500,12,gy+"font-family:'Noto Sans'"))}
  ${R(762,24,T(2485,'Release of version 1.',143,16,'color:#24292e'))}
  ${R(764,28,B(2364,86,28,'background:#fafbfc;border:1px solid #d5d8dc;border-radius:6px;gap:3px;color:#444d56',T(0,'Compare',49,12.500)+I(0,'caret',9,'color:#24292e')))}
  ${R(797.500,1,B(2484,978,1,'background:#e1e4e8'))}
  ${R(825.500,22,I(2492,'caret',9)+T(2508,'Assets',39.500,12.500,b6)+B(2552,21,20,'background:#e6e8ea;border-radius:10px',T(0,'4',7,12)),'color:#24292e')}
  ${asset(868.500,'pkg0',T(2517.500,'MyAppInstaller_web.exe',155,14,lk+b6))}${asset(902.500,'pkg',T(2517.500,'MyAppInstaller_web.exe',155,14,lk+b6))}
  ${asset(936.500,'zip',T(2513,'Source code',77,14,lk+b6)+T(2595,'(zip)',26,14,lk))}${asset(970.500,'zip',T(2513,'Source code',77,14,lk+b6+'text-decoration:underline')+T(2595,'(tar.gz)',41,14,lk+'text-decoration:underline'))}
  ${R(972,22,B(1920,463,22,'background:#dee1e6;border-radius:0 4px 0 0;color:#3c4043',T(0,'https://github.com/fmi-basel/ggrosshans_LuciferaseAssayAnalyzer/archive/v1.1.tar.gz',450,12.500)))}
  ${R(543,880,B(3823,17,880,'background:#f1f1f1'))}
  ${R(112,16,I(3831.500,'caretu',9,'color:#a3a3a3'))}${R(450,660,B(3825,13,660,'background:#c1c1c1'))}${R(974,12,I(3831.500,'caret',9,'color:#505050'))}
  ${R(1011.500,57,I(1948,'rar',16)+T(1969.500,'MyAppInstaller_we....zip',137,13,'color:#4d5156')+I(2133,'upc',11,g)+B(2156,1,44,'background:#d0d0d0')+I(2181,'rar',16)+T(2202,'MyAppInstaller_we....zip',137,13,'color:#4d5156')+I(2366,'upc',11,g)+B(2389,1,44,'background:#d0d0d0')+B(3726,78,32,'border:1px solid #dadce0;border-radius:4px;color:#1a73e8',T(0,'Show all',45,12.500))+I(3822,'x',13,g),'background:#fff;border-top:1px solid #d5d5d5')}
  </ui-col>`;
}});

/* ---------- File Explorer ---------- */
def('explorer-window',class extends HTMLElement{connectedCallback(){
  const R=rowAt(2119),k='color:#000;',fs=12.500;
  const nav=[[246,'gfold','gstudrep',47,1],[270,'fold2','meeumilo',53,1],[294,'fold2','ChIPseq2587_grh',92],[318,'fold2','Data',23.500],[342,'fold2','ggrosshans_Lucif',91],[366,'fold2','scripts',34],[398,'dropbox','Dropbox (FMI)',76.500],[430,'onedrive','OneDrive',48.500],[462,'pc','This PC',38],[486,'cube','3D Objects',57],[510,'desk','Desktop',42.500],[534,'down','Downloads',58.500],[558,'fold2','ggrossha tungste',91],[582,'fold2','ggrossha tungste',91],[606,'docp','meeumilo',53],[630,'music','Music',31]];
  const files=[['matfile','300920OP50vsNA22.mat',127.500],['matfile','300920OP50vsNA22_old.mat',149.500],['word','Results_6_MM.docx',102.500],['word','Intro_14_MM_.docx',102],['word','Intro_9_MM.docx',91],['matfile','20200805_hbl1_degr_lin29_lin46_mut.mat',216],['excel','20200805_hbl1_degr_lin29_lin46_mut_pd.xlsx',233],['matfile','SR_20200723_MYRF-degron_25h_Auxin.mat',228.500],['txtf','20200805_hbl1_degr_lin29_lin46_mut.TXT',214],['matfile','SR_20200723_MYRF-degron_25h_Auxin_2.mat',239.500],['matfile','SR_20200723_MYRF-degron_25h_Auxin_1.mat',239.500],['excel','SR_20200723_MYRF-degron_25h_Auxin_1_pd.xlsx',257],['excel','SR_20200723_MYRF-degron_25h_Auxin_2_pd.xlsx',257],['txtf','SR_20200723_MYRF-degron_25h_Auxin_1.TXT',238],['txtf','SR_20200723_MYRF-degron_25h_Auxin_2.TXT',238],['matfile','20200722_MW_NHR-25_L1_13h_auxin.mat',220.500],['matfile','20200722_MW_NHR-25_L1_13h_auxin_2.mat',232]];
  const navHtml=nav.map(([y,n,t,w,p],i)=>{const top=i>5&&i<9,ix=top?2150.500:2158.500,tx=top?2164.500:2172;return R(y,24,I(ix,n,16)+T(tx,t,w,fs)+(p?I(2249.500,'pin',11):''),i==14?'background:#d9d9d9':'')}).join('');
  const G='color:#1e395b;';
  this.attachShadow({mode:'open'}).innerHTML=`<style>:host{display:block;box-sizing:border-box;width:520px;height:519px;background:#fff;border:1px solid #868686;box-shadow:0 3px 10px rgba(0,0,0,.35);overflow:hidden}.nav,.list{overflow:hidden;grid-column:1}.nav{width:140px;height:400px}.list{width:400px;height:382px;padding-left:0}</style>
  <ui-col o="138">
  ${R(152,28,I(2134,'fold2',15)+B(2150,1,12,'background:#777')+I(2168,'check',15)+I(2189,'fold2',15)+I(2208,'cust',9)+B(2220,1,12,'background:#777')+T(2228.500,'Milou - tmp',63,fs,'color:#999')+I(2571,'min',11,'color:#999')+I(2616,'max',11,'color:#777'))}
  ${R(180,24,B(2119,56,24,'background:#0063b1;color:#fff',T(0,'File',18,fs))+T(2189,'Home',30,fs)+T(2248,'Share',29,fs)+T(2306,'View',25,fs),'color:#333;border-bottom:1px solid #d5d5d5')}
  ${R(212,30,I(2138,'back',13,'color:#666')+I(2168,'fwd',13,'color:#ccc')+I(2191,'v',7,'color:#777')+I(2212,'upa',13,'color:#666')+B(2225,243,30,'border:1px solid #d9d9d9;justify-content:flex-start;color:#555',`<ui-row h="28" o="2226">${I(2235,'fold2',15)}${I(2253,'laq',10)}${T(2265.500,'mee...',31,fs,k)}${I(2308,'right',8)}${T(2319,'Milo...',32,fs,k)}${I(2363,'right',8)}${I(2423,'v',11)}${B(2437,1,30,'background:#d9d9d9')}${I(2453,'refr',13)}</ui-row>`)+B(2480,160,30,'border:1px solid #d9d9d9;justify-content:flex-start;color:#777',`<ui-row h="28" o="2481">${I(2501,'mag',14,'transform:none;color:#888')}${T(2521,'Search Milou - tmp',102,fs)}</ui-row>`))}
  <ui-row y="234" h="400" o="2119"><div class="nav" x="2119"><ui-col o="234">${navHtml}</ui-col></div>
   ${B(2259,16,400,'background:#f0f0f0;color:#555;justify-content:flex-start',`<ui-col o="234" style="width:16px;height:400px">${rowAt(0)(243,12,I(8,'upc',10))}${rowAt(0)(402,168,B(0,15,168,'background:#cdcdcd'))}${rowAt(0)(625,12,I(8,'v',10))}</ui-col>`)}${B(2277,1,400,'background:#f0f0f0')}</ui-row>
  ${R(246.500,26,B(2290,13,13,'border:1px solid #333;background:#fff')+T(2313.500,'Name',32,fs,'color:#44597a')+B(2618,1,24,'background:#e0e0e0'))}
  <ui-row y="233" h="382" o="2119"><div class="list" x="2280"><ui-col o="233">${files.map(([n,t,w],i)=>rowAt(2280)(276+i*21,21,I(2319.500,n,16)+T(2332.500,t,w,fs))).join('')}</ui-col></div></ui-row>
  ${R(624.500,15,B(2279,400,15,'background:#f0f0f0;justify-content:flex-start;color:#555',`<ui-row h="15" o="2279">${I(2287,'left',9)}${B(2296,177,15,'background:#cdcdcd')}</ui-row>`))}
  ${R(645,20,T(2133.500,'78 items',43.500,fs)+B(2187,1,11,'background:#ddd')+T(2198,'State:',28,fs)+I(2237,'sync',16)+T(2247,'Offline (background sync)',137.500,fs)+B(2393,1,11,'background:#ddd')+T(2399,'Sync status:',61,fs)+I(2478,'err',16,'transform:scaleX(1.230)')+T(2492,'Error',24.500,fs)+B(2525,1,11,'background:#ddd'),G)}
  </ui-col>`;
}});

/* ---------- thumbnail of the earlier figure inside the document ---------- */
def('figure-thumb',class extends HTMLElement{connectedCallback(){
  let seed=7;const rnd=()=>(seed=(seed*16807)%2147483647)/2147483647;
  const env=[[116,668,4],[148,660,8],[152,650,18],[188,648,18],[189,670,3],[198,672,3],[199,645,22],[246,640,22],[247,665,3],[257,667,3],[258,635,22],[296,615,25],[297,655,6],[308,662,5],[309,612,20],[325,600,35],[340,595,42],[357,590,45],[358,652,6],[373,662,6],[374,585,50],[395,565,55],[420,555,60],[435,545,60],[450,560,50],[465,540,55],[473,490,30],[477,590,10],[480,605,8],[492,598,8],[498,575,8],[502,450,10],[506,485,8],[510,300,10],[514,330,30],[518,260,40],[522,240,60],[526,190,30],[528,260,20],[530,182,5]];
  let pts=[],gr=[];for(let i=0;i<env.length-1;i++){const[a,y,n]=env[i],[b,z,m]=env[i+1];for(let x=a;x<b;x+=1.900){const t=(x-a)/(b-a);const q=[x.toFixed(1),Math.max(182,y+(z-y)*t+(rnd()-.5)*2*(n+(m-n)*t)).toFixed(1)];pts.push(q)}}
  const segs=[[247,258],[297,309],[358,374],[478,498]].map(([a,b])=>pts.filter(p=>p[0]>=a&&p[0]<b));
  let tk='',lb='';for(let i=0;i<7;i++){const x=150+i*70.900;tk+=`<path d="M${x} 181v8M${x} 678v-8"/>`;lb+=`<text x="${x}" y="694" text-anchor="middle">${10*(i+1)}</text>`}
  for(let i=0;i<=10;i++){const y=181+i*49.700;tk+=`<path d="M86 ${y}h5M592 ${y}h-5"/>`;lb+=`<text x="84" y="${y+4}" text-anchor="end">${2000-200*i}</text>`}
  const bt=[[86,'#b9d4f3',51,'Load data'],[159,'#fff',35,'Go to sample'],[207,'#b9d4f3',47,'Previous sample'],[261,'#c1ddc6',44,'Annotate Hatch'],[312,'#c1ddc6',38,'Detect molts'],[357,'#b9d4f3',44,'Next sample'],[483,'#dceafa',50,'Check annotation'],[541,'#b9d4f3',50,'Annotation to Excel']].map(([x,c,w,t])=>`<rect x="${x}" y="${c=='#fff'?738:734}" width="${w}" height="${c=='#fff'?28:36}" fill="${c}" stroke="#bbb" stroke-width=".7"/><text x="${x+w/2}" y="755" text-anchor="middle" textLength="${w*.7}" lengthAdjust="spacingAndGlyphs">${t}</text>`).join('');
  const ck=[[162,712,'Set all hatch to 0',32],[244,709,'M1 valid',16],[311,709,'M2 valid',16],[381,709,'M3 valid',16],[450,709,'M4 valid',16],[410,754,'Valid Sample',26]].map(([x,y,t,w])=>`<rect x="${x}" y="${y-6}" width="5" height="10" fill="#fff" stroke="#777" stroke-width=".6"/><text x="${x+6}" y="${y+2}" textLength="${w}" lengthAdjust="spacingAndGlyphs">${t}</text>`).join('');
  this.attachShadow({mode:'open'}).innerHTML=`<style>:host,svg{display:block}</style><svg width="351" height="199" viewBox="66 177 529 596" preserveAspectRatio="none" font-family="Liberation Sans" font-size="9" fill="#555">
  <rect x="66" y="177" width="529" height="596" fill="#f0f0f0"/><rect x="86" y="181" width="506" height="497" fill="#fff"/><g fill="none" stroke="#999" stroke-width="1">${tk}<rect x="86" y="181" width="506" height="497"/></g>${lb}
  <path d="M86 675l3-3 3 4 3-4 4 3 3-3 4 4 4-3 4 2 2-2" fill="none" stroke="#f06a6a" stroke-width="2"/><polyline fill="none" stroke="#9fcce8" stroke-width="1.200" points="${pts.map(p=>p.join()).join(' ')}"/>${segs.map(s=>`<polyline fill="none" stroke="#66d08a" stroke-width="1.700" points="${s.map(p=>p.join()).join(' ')}"/>`).join('')}
  <rect x="86" y="700" width="29" height="21" fill="#fff" stroke="#ccc" stroke-width=".6"/><text x="100" y="714" text-anchor="middle" textLength="11">y max</text>${ck}${bt}</svg>`;
}});

/* ---------- Word ---------- */
def('word-window',class extends HTMLElement{connectedCallback(){
  const R=rowAt(2628),c5='color:#555;',car=x=>I(x,'caret',7,'color:#777'),sep=(x,h=18)=>B(x,1,h,'background:#e0e0e0'),la=x=>I(x,'launch',7),L="font-family:Lato,'Open Sans',sans-serif;color:#1a1a1a;";
  const hi='#c2d5f2';
  const para=(y,x,t,w,pre='')=>R(y,25,pre+T(x,t,w,19,L));
  const dash=T(2789,'-',5.500,19,L);
  const st=(x,t,w,f,c)=>T(x,t,w,f,`font-family:Lato,sans-serif;color:${c}`);
  this.attachShadow({mode:'open'}).innerHTML=`<style>:host{display:block;box-sizing:border-box;width:1016px;height:823px;background:#fff;border:1px solid #8a8a8a;box-shadow:0 2px 8px rgba(0,0,0,.12);overflow:hidden;position:relative}.deco{position:absolute;left:0;top:0}ui-col{position:relative}.page{width:100%;box-sizing:border-box}</style>
  <svg class="deco" width="1014" height="49" viewBox="2628 97 1014 49" fill="none" stroke="#ebebeb" stroke-width="4"><circle cx="3422" cy="115" r="26.500" stroke-width="5"/><path d="M3411 127l19-20M3413 104h19v19" stroke-width="7"/><circle cx="3169" cy="135" r="17"/><path d="M3162 142l11-12M3162 128h12v12" stroke-width="5"/><path d="M3155 109h76l24 0M3281 109h0M3331 109h24l22 20M3215 128h66l24 10h100M3256 146l12-10h90M3514 146l20-26h105M3572 146l48-49M3592 146l48-49"/><circle cx="3326" cy="110" r="4"/><circle cx="3150" cy="109" r="4"/><circle cx="3215" cy="127" r="4"/></svg>
  <ui-col o="97">
  ${R(110,24,I(2643.500,'word',17)+I(2670,'save',14)+I(2697,'undo',15)+car(2711)+I(2732.500,'redo',14)+I(2753,'touch',15)+car(2767)+I(2784,'cust',7,'opacity:.6')+T(2992.500,'LuciferaseAssayAnalyzer_Documentation.docx - Word',283,13,'color:#adadad')+I(3522.500,'help',11)+I(3549,'rib',12)+I(3575.500,'min',10,'color:#aaa')+I(3602,'max',10,'color:#aaa')+I(3628,'xthin',10,'color:#999'))}
  ${R(146.500,1,'','background:#d4d4d4')}
  ${R(135,25,B(2628,58,25,'background:#2b579a;color:#fff',T(0,'FILE',20,12.500))+B(2689,56,26,'background:#fff;border:1px solid #d4d4d4;border-bottom:0;color:#2b579a',T(0,'HOME',34,12.500))+T(2758,'INSERT',36.500,12.500)+T(2818.500,'DESIGN',41,12.500)+T(2883,'PAGE LAYOUT',72,12.500)+T(2979,'REFERENCES',68,12.500)+T(3070,'MAILINGS',53,12.500)+T(3147,'REVIEW',41,12.500)+T(3212,'VIEW',27.500,12.500)+T(3263,'ZOTERO',44,12.500)+T(3330.500,'EndNote X7',62.500,12.500)+T(3517.500,'Meeuse, Milou',76,12.500)+car(3602)+B(3610,24,22,'',I(0,'me',24)),c5)}
  ${R(161,18,I(2680.500,'cut',14)+I(3543,'bino',14)+T(3553,'Find',22,12)+car(3586),c5)}
  ${R(168.500,32,I(2653.500,'paste',29))}
  ${R(168.500,22,B(2699,87,22,'border:1px solid #ababab;justify-content:flex-start;color:#333',`<ui-row h="20" o="2700">${T(2702,'Calibri (Body)',71,12.500)}${car(2779)}</ui-row>`)+B(2785,42,22,'border:1px solid #ababab;justify-content:flex-start;color:#333',`<ui-row h="20" o="2786">${T(2788,'11',12,12.500)}${car(2820)}</ui-row>`)+T(2833,'A',9,14)+T(2842,'▴',5,7,'color:#3f73b5;padding-bottom:10px')+T(2854,'A',8,13)+T(2862,'▾',5,7,'color:#3f73b5;padding-bottom:10px')+sep(2872)+T(2880,'Aa',13.500,12.500)+car(2900)+I(2925,'eraser',14)+B(2941.500,31,22,'background:'+hi)+I(2951.500,'bul',15)+car(2967)+I(2983,'numl',15)+car(2998)+I(3014.500,'multi',15)+car(3028)+sep(3037)+I(3052,'outd',14)+I(3073,'ind',14)+sep(3086)+I(3101,'sort',15)+sep(3115)+T(3123,'¶',9,15),c5)}
  ${R(183,18,I(2680.500,'copy',14)+I(3543,'repl',14)+T(3553,'Replace',42,12),c5)}
  ${R(194,16,T(2637.500,'Paste',27,12),c5)}${R(209,6,car(2651))}
  ${R(198.500,22,T(2705,'B',8,13,'font-weight:800')+T(2728,'I',6,14,"font-style:italic;font-weight:700;font-family:'Liberation Serif'")+T(2746,'U',9,13,'text-decoration:underline;font-weight:700')+car(2766)+T(2774,'abc',16,11,'text-decoration:line-through;font-weight:600')+T(2797,'x<span style="font-size:8px;color:#3f73b5;vertical-align:-3px">2</span>',12,13,'font-weight:700')+T(2818,'x<span style="font-size:8px;color:#3f73b5;vertical-align:5px">2</span>',12,13,'font-weight:700')+sep(2838)+I(2852,'Aout',16)+car(2865)+I(2882,'abhl',16)+car(2897.500)+I(2913,'Ared',17)+car(2928.500)+B(2941.500,21,22,'background:'+hi)+I(2951.500,'al',14)+I(2972.500,'ac',14)+I(2993.500,'ar',14)+I(3014,'aj',14)+sep(3028)+I(3042,'ls',14)+car(3055)+sep(3066)+I(3080,'bucket',15)+car(3095)+I(3110,'bord',14)+car(3126),c5)}
  ${R(204,18,I(3543,'sel',14)+T(3553,'Select',32,12)+car(3591),c5)}
  ${R(192,86,sep(2695,83)+sep(2938,83)+sep(3142,83)+sep(3529,83)+sep(3605,83))}
  ${R(182,60,B(3147,376,60,'border:1px solid #c6c6c6;justify-content:flex-start',`<ui-row h="60" o="3148">${B(3509,1,60,'background:#c6c6c6')}${B(3510,13,19,'border-top:1px solid #c6c6c6;border-bottom:1px solid #c6c6c6',car(0))}</ui-row>`))}
  ${R(163,8,I(3516,'caretu',6,'color:#bbb'))}${R(202,8,I(3516,'cust',8,'opacity:.6'))}
  ${R(170,50,B(3442,60,46,'align-items:flex-start;justify-content:flex-start',`<ui-text style="font-size:35px;font-family:Lato;font-weight:300;line-height:44px;color:#1a1a1a">AaBb</ui-text>`))}
  ${R(174,26,st(3154,'AaBbCcDd',60,14,'#1a1a1a')+st(3226,'AaBbCcDd',60,14,'#1a1a1a')+B(3298,60,26,'justify-content:flex-start',st(0,'AaBbCc',68,19,'#5b9bd5'))+B(3370,60,26,'justify-content:flex-start',st(0,'AaBbCcD',62,17,'#5b9bd5')))}
  ${R(198.500,16,T(3158.500,'¶ Normal',49,12)+T(3224.500,'¶ No Spac...',62,12)+T(3299.500,'Heading 1',55,12)+T(3372,'Heading 2',55,12)+T(3460,'Title',23,12),'color:#666')}
  ${R(228,16,T(2630.500,'Clipboard',46,11.500)+la(2687)+T(2799,'Font',20,11.500)+la(2930)+T(3008,'Paragraph',48.500,11.500)+la(3134.500)+T(3315,'Styles',26,11.500)+la(3521)+T(3551,'Editing',32,11.500)+I(3629,'upc',10),'color:#666')}
  ${R(236.500,1,'','background:#d4d4d4')}
  ${R(566.500,659,B(3599,44,659,'background:linear-gradient(#fdfdfd,#f8f8f8 30%,#eee);border-left:1px solid #d0d0d0'))}
  ${R(887.500,18,'','background:#efefef')}
  ${para(307,2727,'To manually change the hatch, click: Annotate Hatch. A horizontal and vertical line will appear.',731,T(2695,'4)',15,19,L))}
  ${para(332,2727,'The vertical line (at any horizontal position) can be used to indicate the hatch. I do not',692)}
  ${para(357.500,2727,'recommend to use the middle of the cross, because the lines disappear at that position.',677)}
  ${para(382.500,2727,'To manually change the molts, use one of the following:',432,T(2695,'5)',15,19,L))}
  ${para(407.500,2820,'If 4 regions are already detected as molts, but the molt entry or molt exit of these',633,dash)}
  ${para(433,2820,'molts are not annotated properly, unclick the corresponding <span style="text-decoration:underline wavy #f00 1px">Mn</span> valid (with',572)}
  ${para(458,2820,'n=1<span style="text-decoration:underline wavy #22f 1px">,2,3,4</span>). The green dots of that molt will disappear and the cross for annotation',638)}
  ${para(483,2820,'will appear. First clink on the molt entry, next click on the molt exit. New green dots',648)}
  ${para(508,2820,'will appear.',89.500)}
  ${para(533,2820,'If 4 regions are already detected as molts, but',354,dash)}
  ${R(658.500,199,'<figure-thumb x="2664"></figure-thumb>')}
  ${para(787,2820,'If less than 4 molts are detected',248,dash)}
  ${R(826,24,B(2664,69,24,'background:#ff0',T(0,'# Output',68.500,19,L)))}
  ${R(865,24,B(2664,168,24,'background:#ff0',T(0,'# References/Citation',168,19,L)))}
  ${R(906.500,21,T(2634.500,'PAGE 4 OF 4',58,11.500)+T(2707.500,'1105 WORDS',62,11.500)+I(2791,'book',15)+T(2813,'ENGLISH (UNITED STATES)',121,11.500)+I(3377,'read',13)+B(3394,32,21,'background:#1c4685',I(0,'print',13))+I(3442.500,'web',13)+B(3463,8,2,'background:#fff')+B(3474,100,1,'background:#dbe4f2')+B(3526,4,11,'background:#fff')+I(3582,'plus',10)+T(3601,'130%',24,11.500),'background:#2b579a;color:#eef3fb')}
  </ui-col>`;
}});

/* ---------- desktop ---------- */
def('desk-top',class extends HTMLElement{connectedCallback(){
  this.attachShadow({mode:'open'}).innerHTML=`<style>:host{display:flex;position:relative;width:3840px;height:1080px;overflow:hidden}.screen{display:flex;flex-direction:column;width:1920px;flex:none}explorer-window,word-window{position:absolute}explorer-window{left:2118px;top:137px}word-window{left:2627px;top:96px}</style>
  <div class="screen"><matlab-window></matlab-window><task-bar primary></task-bar></div>
  <div class="screen"><chrome-window></chrome-window><task-bar></task-bar></div>
  <explorer-window></explorer-window><word-window></word-window>`;
}});
</script></body></html>
